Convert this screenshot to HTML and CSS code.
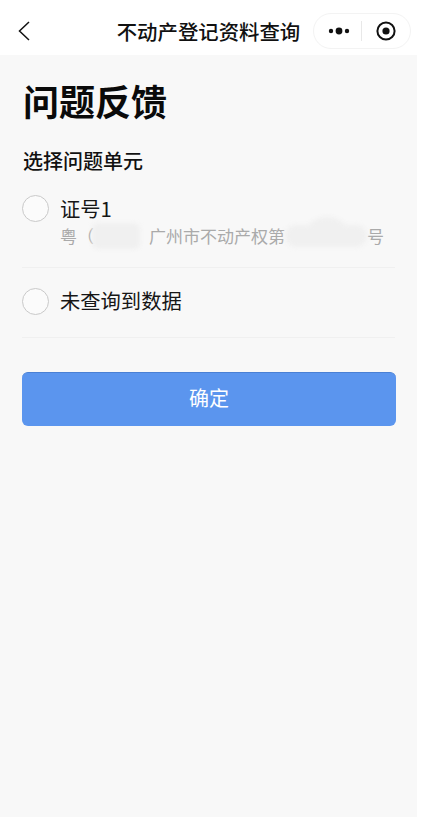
FILE: index.html
```html
<!DOCTYPE html>
<html lang="zh-CN">
<head>
<meta charset="utf-8">
<title>问题反馈</title>
<link rel="stylesheet" href="styles.css">
</head>
<body>
<div class="app">
  <header class="nav">
    <svg class="back" width="14" height="22" viewBox="0 0 14 22"><path d="M11 2 1.5 11l9.500 9" fill="none" stroke="#111" stroke-width="1.5"/></svg>
    <div class="nav-title">不动产登记资料查询</div>
    <div class="capsule">
      <svg class="more" width="22" height="8" viewBox="0 0 22 8"><circle cx="3" cy="4" r="2.2" fill="#111"/><circle cx="11" cy="4" r="3.4" fill="#111"/><circle cx="19" cy="4" r="2.2" fill="#111"/></svg>
      <span class="cap-sep"></span>
      <svg class="target" width="20" height="20" viewBox="0 0 20 20"><circle cx="10" cy="10" r="8.6" fill="none" stroke="#111" stroke-width="2"/><circle cx="10" cy="10" r="3.6" fill="#111"/></svg>
    </div>
  </header>
  <main class="page">
    <h1 class="title">问题反馈</h1>
    <h2 class="subtitle">选择问题单元</h2>
    <div class="option option-first">
      <span class="radio"></span>
      <div class="option-body">
        <div class="option-label">证号1</div>
        <div class="option-desc">粤<span class="paren">（</span><span class="blur blur-a"></span><span class="mid">广州市不动产权第</span><span class="blur blur-b"></span>号</div>
      </div>
    </div>
    <div class="option option-second">
      <span class="radio"></span>
      <div class="option-body option-body-single">
        <div class="option-label">未查询到数据</div>
      </div>
    </div>
    <button class="confirm" type="button"><span class="confirm-text">确定</span></button>
  </main>
</div>
</body>
</html>
```
FILE: styles.css
```css
* { box-sizing: border-box; }
html, body { margin: 0; padding: 0; background: #fff; }
body { width: 424px; height: 825px; overflow: hidden; font-family: "Noto Sans CJK SC", "Noto Sans", sans-serif; color: #111; }
.app { width: 417px; height: 817px; display: flex; flex-direction: column; }
.nav { height: 55px; flex: none; background: #fff; display: flex; align-items: center; position: relative; padding: 0 6px 0 18px; justify-content: space-between; }
.back { display: block; margin-top: 7px; }
.nav-title { position: absolute; left: 0; width: 417px; text-align: center; font-size: 20.4px; font-weight: 500; line-height: 28px; top: 17px; }
.capsule { width: 98px; height: 36px; margin-top: 6px; border: 1px solid #f3f3f3; border-radius: 18px; display: flex; align-items: center; background: #fff; padding-left: 14px; }
.more { display: block; }
.cap-sep { width: 1px; height: 20px; background: #e8e8e8; margin-left: 11px; margin-right: 14px; }
.target { display: block; }
.page { flex: 1; background: #f8f8f8; padding: 0 22px; display: flex; flex-direction: column; }
.title { margin: 19px 0 0 1px; font-size: 36px; line-height: 52px; font-weight: 700; color: #0a0a0a; }
.subtitle { margin: 21px 0 0 1px; font-size: 20px; line-height: 28px; font-weight: 500; color: #111; }
.option { display: flex; align-items: flex-start; border-bottom: 1px solid #f0f0f0; }
.option-first { margin-top: 18px; height: 75px; padding-top: 2px; }
.option-second { height: 70px; padding-top: 20px; }
.radio { width: 27px; height: 27px; flex: none; border-radius: 50%; border: 1px solid #c9c9c9; background: #fbfbfb; }
.option-body { margin-left: 11px; }
.option-body-single { margin-top: -1px; }
.option-label { font-size: 20.3px; line-height: 27px; color: #161616; }
.option-desc { margin-top: 1px; font-size: 17px; line-height: 26px; color: #aaa; display: flex; align-items: center; white-space: nowrap; }
.paren { width: 17px; text-align: center; }
.blur { display: block; background: #f0f0f0; filter: blur(2px); }
.blur-a { width: 48px; height: 26px; margin-left: -2px; margin-right: 9px; border-radius: 6px; }
.blur-b { position: relative; width: 82px; height: 22px; border-radius: 11px; }
.blur-b::before { content: ""; position: absolute; left: 24px; top: -8px; width: 36px; height: 20px; border-radius: 50%; background: #f0f0f0; }
.confirm { margin-top: 34px; width: 374px; height: 54px; border: 0; border-top: 1px solid #4a80d4; border-radius: 6px; background: #5b95ee; color: #fff; font-family: inherit; font-size: 20px; padding: 0 0 4px; }
.confirm-text { display: block; line-height: 28px; }
```
